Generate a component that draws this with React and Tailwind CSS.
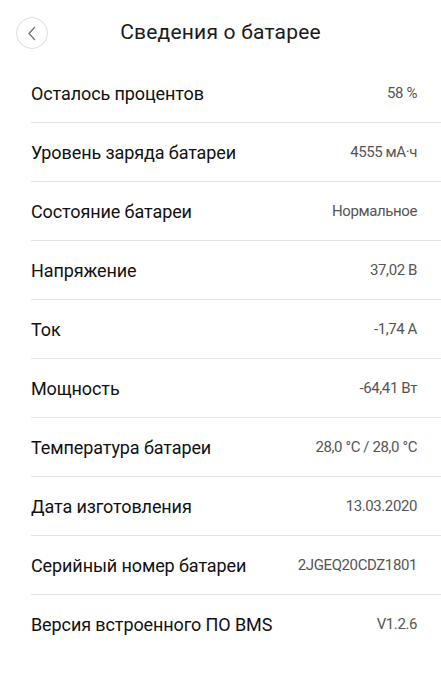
import React from 'react'

const rows = [
    ['Осталось процентов', '58 %'],
    ['Уровень заряда батареи', '4555 мА·ч'],
    ['Состояние батареи', 'Нормальное'],
    ['Напряжение', '37,02 В'],
    ['Ток', '-1,74 А'],
    ['Мощность', '-64,41 Вт'],
    ['Температура батареи', '28,0 °C / 28,0 °C'],
    ['Дата изготовления', '13.03.2020'],
    ['Серийный номер батареи', '2JGEQ20CDZ1801'],
    ['Версия встроенного ПО BMS', 'V1.2.6'],
]

export default function App() {
    return (
        <div className="w-[441px] h-[699px] bg-white font-['Roboto',sans-serif] select-none">
            {/* header */}
            <div className="relative flex items-center justify-center h-[64px]">
                <button className="absolute left-[16px] top-[17px] w-[32px] h-[32px] rounded-full border border-[#dcdcdc] flex items-center justify-center">
                    <svg width="10" height="15" viewBox="0 0 10 15" fill="none">
                        <path d="M7.5 1.5L2 7.5l5.5 6" stroke="#777" strokeWidth="1.4" strokeLinecap="round" strokeLinejoin="round" />
                    </svg>
                </button>
                <span className="text-[21px] text-[#1a1a1a] tracking-[0.2px] mt-[2px]">Сведения о батарее</span>
            </div>
            {/* list */}
            <div className="pl-[31px]">
                {rows.map(([label, value], i) => (
                    <div
                        key={label}
                        className={
                            i < rows.length - 1
                                ? 'flex items-center justify-between h-[59px] pr-[24px] border-b border-[#e3e3e3]'
                                : 'flex items-center justify-between h-[59px] pr-[24px]'
                        }
                    >
                        <span className="text-[18px] text-[#111] tracking-[-0.1px]">{label}</span>
                        <span className="text-[15px] text-[#555] tracking-[-0.4px]">{value}</span>
                    </div>
                ))}
            </div>
        </div>
    )
}
